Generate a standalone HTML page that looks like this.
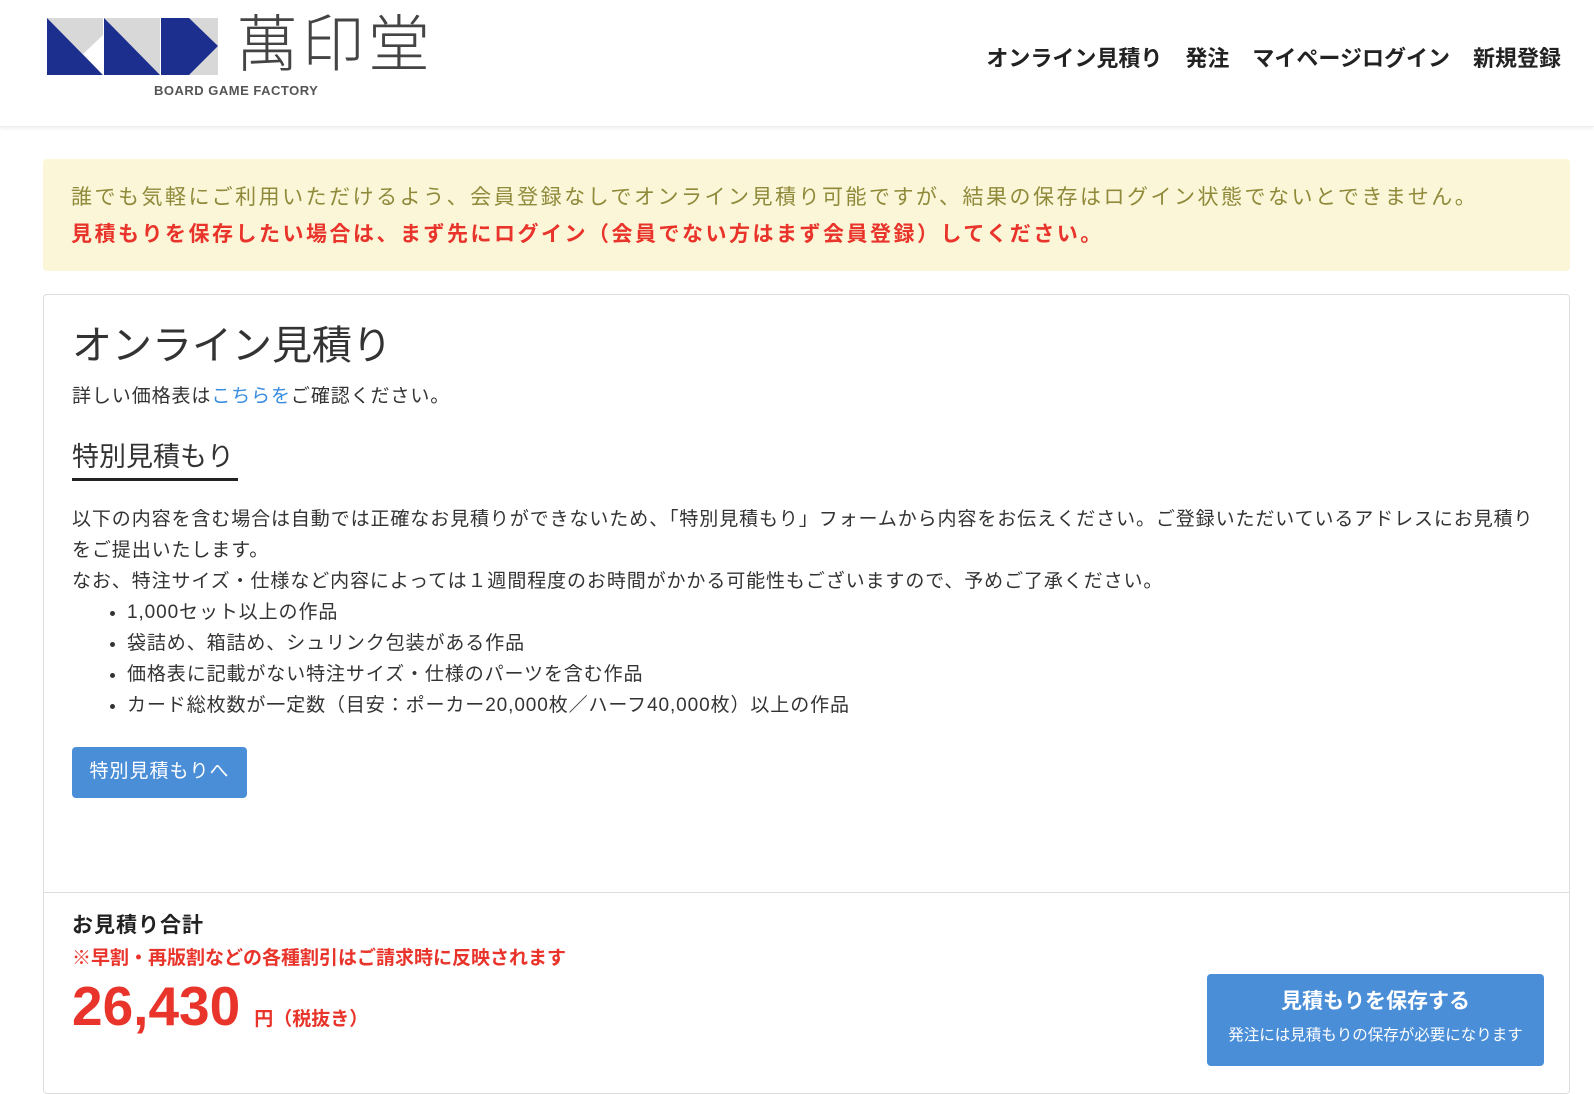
<!DOCTYPE html>
<html><head><meta charset="utf-8">
<style>
*{box-sizing:border-box;margin:0;padding:0}
body{width:1594px;height:1054px;overflow:hidden;background:#fff;font-family:"Liberation Sans","Noto Sans CJK JP",sans-serif;color:#333;position:relative}
.hdr{position:absolute;left:0;top:0;width:1594px;height:127px;background:#fff;box-shadow:0 2px 4px rgba(0,0,0,.06);border-bottom:1px solid #eee}
.nav{position:absolute;top:41px;right:33px;font-size:22px;font-weight:bold;color:#222}
.nav span{margin-left:23px}
.note{position:absolute;left:43px;top:159px;width:1527px;height:112px;background:#fcf6d9;border-radius:4px;padding:20px 28px;font-size:21px;line-height:37px;letter-spacing:2.5px}
.note .a{color:#8f8a3a}
.note .b{color:#e8342a;font-weight:bold}
.card{position:absolute;left:43px;top:294px;width:1527px;height:800px;border:1px solid #ddd;border-radius:4px}
.in{position:absolute;left:28px}
h1{font-weight:normal;font-size:40px;color:#333}
.t{font-size:19px;line-height:31px;color:#333;letter-spacing:.9px}
a{color:#3a8ee0;text-decoration:none}
.btn{background:#4a8ed8;color:#fff;border-radius:4px}
</style></head><body>
<div class="hdr">
<svg style="position:absolute;left:47px;top:18px" width="172" height="58" viewBox="0 0 172 58">
<rect x="0" y="0" width="56" height="57" fill="#d8d8d8"/>
<polygon points="0,0 0,57 56,57" fill="#1c2f8e"/>
<polygon points="56,17 36,36 56,57" fill="#fff"/>
<rect x="57" y="0" width="56" height="57" fill="#d8d8d8"/>
<polygon points="57,0 57,57 113,57" fill="#1c2f8e"/>
<rect x="114" y="0" width="57" height="57" fill="#d8d8d8"/>
<polygon points="114,0 142,0 171,28 142,57 114,57" fill="#1c2f8e"/>
</svg>
<div style="position:absolute;left:236px;top:6px;font-size:62px;letter-spacing:4px;color:#444;font-weight:200;line-height:80px">萬印堂</div>
<div style="position:absolute;left:154px;top:83px;font-size:13px;font-weight:bold;color:#555;letter-spacing:.5px">BOARD GAME FACTORY</div>
<div class="nav"><span>オンライン見積り</span><span>発注</span><span>マイページログイン</span><span>新規登録</span></div>
</div>
<div class="note"><div class="a">誰でも気軽にご利用いただけるよう、会員登録なしでオンライン見積り可能ですが、結果の保存はログイン状態でないとできません。</div><div class="b">見積もりを保存したい場合は、まず先にログイン（会員でない方はまず会員登録）してください。</div></div>
<div class="card">
<h1 class="in" style="top:18px">オンライン見積り</h1>
<div class="in t" style="top:86px">詳しい価格表は<a>こちらを</a>ご確認ください。</div>
<div class="in" style="top:140px;font-size:27px;padding-bottom:4px;border-bottom:3px solid #222;width:166px">特別見積もり</div>
<div class="in t" style="top:209px;width:1470px">以下の内容を含む場合は自動では正確なお見積りができないため、「特別見積もり」フォームから内容をお伝えください。ご登録いただいているアドレスにお見積り<br>をご提出いたします。<br>なお、特注サイズ・仕様など内容によっては１週間程度のお時間がかかる可能性もございますので、予めご了承ください。
<ul style="padding-left:55px">
<li>1,000セット以上の作品</li><li>袋詰め、箱詰め、シュリンク包装がある作品</li><li>価格表に記載がない特注サイズ・仕様のパーツを含む作品</li><li>カード総枚数が一定数（目安：ポーカー20,000枚／ハーフ40,000枚）以上の作品</li></ul></div>
<div class="in btn" style="top:452px;width:175px;height:51px;font-size:19px;line-height:49px;text-align:center;letter-spacing:1px">特別見積もりへ</div>
<div style="position:absolute;left:0;top:597px;width:1525px;border-top:1px solid #ddd"></div>
<div class="in" style="top:614px;font-size:21px;font-weight:bold;color:#222;letter-spacing:1px">お見積り合計</div>
<div class="in" style="top:648px;font-size:19px;font-weight:bold;color:#e8342a">※早割・再版割などの各種割引はご請求時に反映されます</div>
<div class="in" style="top:679px;color:#e8342a;font-weight:bold"><span style="font-size:55px">26,430</span><span style="font-size:19px;margin-left:14px">円（税抜き）</span></div>
<div class="btn" style="position:absolute;left:1163px;top:679px;width:337px;height:92px;text-align:center">
<div style="font-size:21px;font-weight:bold;margin-top:11px">見積もりを保存する</div>
<div style="font-size:15.5px;margin-top:8px">発注には見積もりの保存が必要になります</div></div>
</div>
</body></html>
